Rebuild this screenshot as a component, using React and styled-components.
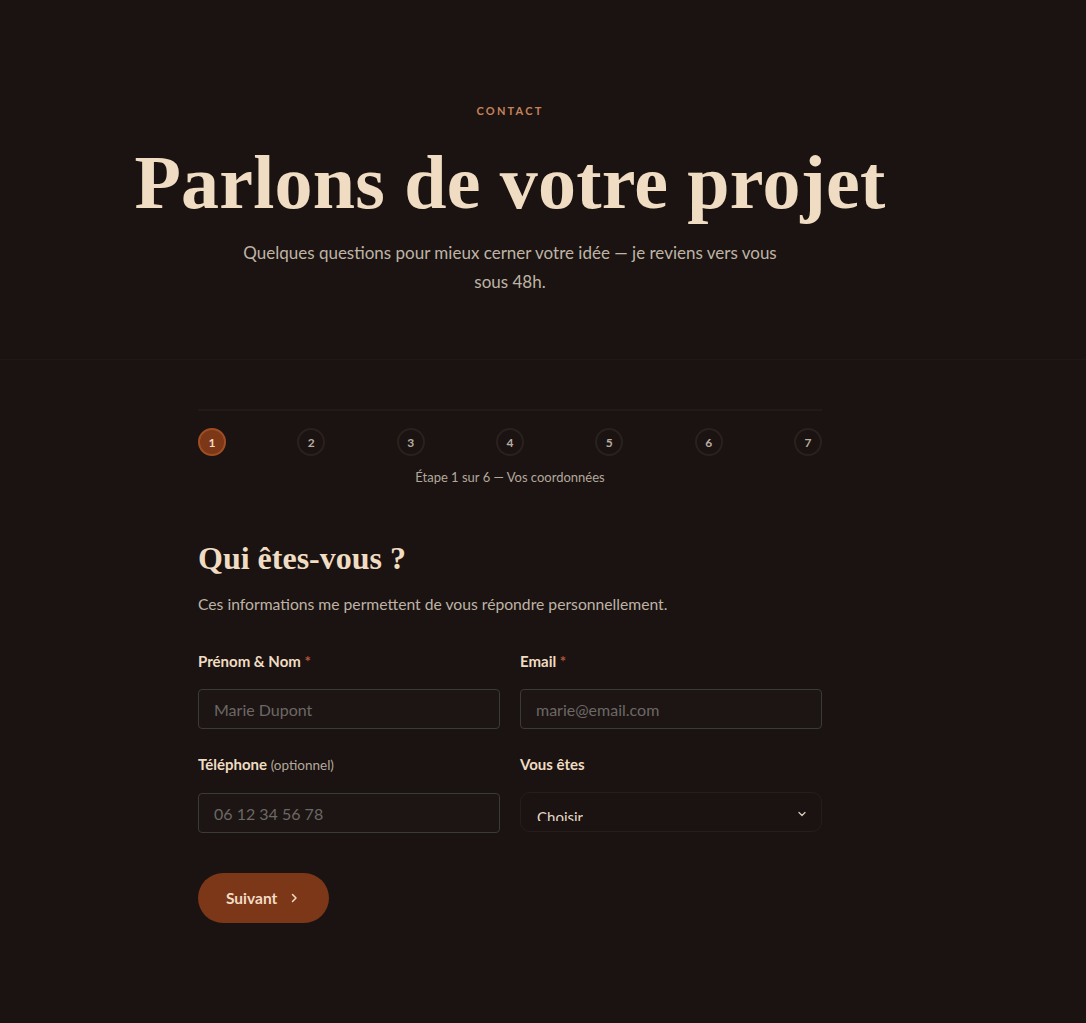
import React from "react";
import styled, { createGlobalStyle } from "styled-components";

const GlobalStyle = createGlobalStyle`
  html, body {
    margin: 0;
    padding: 0;
    background: #1a1311;
  }
  body {
    font-family: "Lato", "Noto Sans", sans-serif;
    color: #e9dccb;
  }
  * { box-sizing: border-box; }
`;

const Page = styled.div`
  min-height: 1023px;
  background: #1a1311;
`;

const Hero = styled.header`
  padding: 103px 0 63px;
  border-bottom: 1px solid #201816;
`;

const Inner = styled.div`
  width: 1020px;
  display: flex;
  flex-direction: column;
  align-items: center;
  text-align: center;
`;

const Eyebrow = styled.div`
  font-size: 11px;
  line-height: 16px;
  font-weight: 700;
  letter-spacing: 2.2px;
  color: #c7825a;
  text-transform: uppercase;
`;

const Title = styled.h1`
  margin: 24px 0 0;
  font-family: "Liberation Serif", "DejaVu Serif", serif;
  font-weight: 700;
  font-size: 76px;
  line-height: 79px;
  letter-spacing: 0.2px;
  color: #efdcc2;
`;

const Lead = styled.p`
  margin: 16px 0 0;
  width: 560px;
  font-size: 17px;
  line-height: 29px;
  color: #bfb3a6;
`;

const FormSection = styled.section`
  width: 1020px;
  display: flex;
  justify-content: center;
  padding-top: 49px;
`;

const FormColumn = styled.div`
  width: 624px;
  display: flex;
  flex-direction: column;
`;

const Track = styled.div`
  height: 2px;
  background: #231a17;
`;

const Steps = styled.div`
  display: flex;
  justify-content: space-between;
  margin-top: 17px;
`;

const StepDot = styled.div`
  width: 28px;
  height: 28px;
  border-radius: 50%;
  display: flex;
  align-items: center;
  justify-content: center;
  font-size: 12px;
  font-weight: 700;
  color: ${(p) => (p.$active ? "#f2dcc6" : "#b9ada2")};
  background: ${(p) => (p.$active ? "#7c3717" : "#1a1311")};
  border: 2px solid ${(p) => (p.$active ? "#a14d23" : "#2a211e")};
`;

const StepCaption = styled.div`
  margin-top: 12px;
  text-align: center;
  font-size: 13px;
  line-height: 18px;
  color: #b4a89d;
`;

const Heading = styled.h2`
  margin: 54px 0 0;
  font-family: "Liberation Serif", "DejaVu Serif", serif;
  font-weight: 700;
  font-size: 32px;
  line-height: 36px;
  color: #efdcc2;
`;

const Description = styled.p`
  margin: 17px 0 0;
  font-size: 15.7px;
  line-height: 22px;
  color: #bfb3a6;
`;

const Fields = styled.div`
  margin-top: 36px;
  display: grid;
  grid-template-columns: 1fr 1fr;
  column-gap: 20px;
  row-gap: 25px;
`;

const Field = styled.div`
  display: flex;
  flex-direction: column;
  gap: 18px;
`;

const Label = styled.label`
  font-size: 15px;
  line-height: 20px;
  font-weight: 700;
  color: #efdcc2;
`;

const Required = styled.span`
  color: #b5543a;
  font-weight: 700;
`;

const Hint = styled.span`
  font-weight: 400;
  font-size: 13.5px;
  color: #b4a89d;
`;

const Input = styled.input`
  height: 40px;
  width: 100%;
  padding: 0 15px;
  background: #1c1513;
  border: 1px solid #3a3a3b;
  border-radius: 4px;
  font-family: inherit;
  font-size: 16px;
  color: #e9dccb;
  outline: none;
  &::placeholder {
    color: #6c6865;
  }
`;

const SelectBox = styled.div`
  height: 40px;
  border: 1px solid #271e1b;
  border-radius: 10px;
  background: #1a1311;
  display: flex;
  align-items: flex-start;
  justify-content: space-between;
  padding: 0 14px 0 16px;
`;

const SelectValue = styled.div`
  height: 28px;
  overflow: hidden;
  padding-top: 14px;
  font-size: 15px;
  line-height: 20px;
  color: #e6d8c6;
`;

const Chevron = styled.svg`
  margin-top: 16px;
  width: 10px;
  height: 10px;
`;

const NextButton = styled.button`
  margin-top: 40px;
  align-self: flex-start;
  height: 50px;
  padding: 0 31px 0 28px;
  border: none;
  border-radius: 25px;
  background: #7c3718;
  color: #f2dcc6;
  font-family: inherit;
  font-size: 15.5px;
  font-weight: 700;
  display: flex;
  align-items: center;
  gap: 13px;
  cursor: pointer;
`;

const steps = [1, 2, 3, 4, 5, 6, 7];

export default function App() {
  return (
    <Page>
      <GlobalStyle />
      <Hero>
        <Inner>
          <Eyebrow>Contact</Eyebrow>
          <Title>Parlons de votre projet</Title>
          <Lead>
            Quelques questions pour mieux cerner votre idée — je reviens vers
            vous sous 48h.
          </Lead>
        </Inner>
      </Hero>

      <FormSection>
        <FormColumn>
          <Track />
          <Steps>
            {steps.map((n) => (
              <StepDot key={n} $active={n === 1}>
                {n}
              </StepDot>
            ))}
          </Steps>
          <StepCaption>Étape 1 sur 6 — Vos coordonnées</StepCaption>

          <Heading>Qui êtes-vous ?</Heading>
          <Description>
            Ces informations me permettent de vous répondre personnellement.
          </Description>

          <Fields>
            <Field>
              <Label>
                Prénom &amp; Nom <Required>*</Required>
              </Label>
              <Input placeholder="Marie Dupont" />
            </Field>
            <Field>
              <Label>
                Email <Required>*</Required>
              </Label>
              <Input placeholder="marie@email.com" />
            </Field>
            <Field>
              <Label>
                Téléphone <Hint>(optionnel)</Hint>
              </Label>
              <Input placeholder="06 12 34 56 78" />
            </Field>
            <Field>
              <Label>Vous êtes</Label>
              <SelectBox>
                <SelectValue>Choisir</SelectValue>
                <Chevron viewBox="0 0 10 10" fill="none">
                  <path
                    d="M2 3.5 L5 6.5 L8 3.5"
                    stroke="#d8cbbb"
                    strokeWidth="1.3"
                    strokeLinecap="round"
                    strokeLinejoin="round"
                  />
                </Chevron>
              </SelectBox>
            </Field>
          </Fields>

          <NextButton type="button">
            Suivant
            <svg width="8" height="10" viewBox="0 0 8 10" fill="none">
              <path
                d="M2.5 1.5 L6 5 L2.5 8.5"
                stroke="#f2dcc6"
                strokeWidth="1.5"
                strokeLinecap="round"
                strokeLinejoin="round"
              />
            </svg>
          </NextButton>
        </FormColumn>
      </FormSection>
    </Page>
  );
}
